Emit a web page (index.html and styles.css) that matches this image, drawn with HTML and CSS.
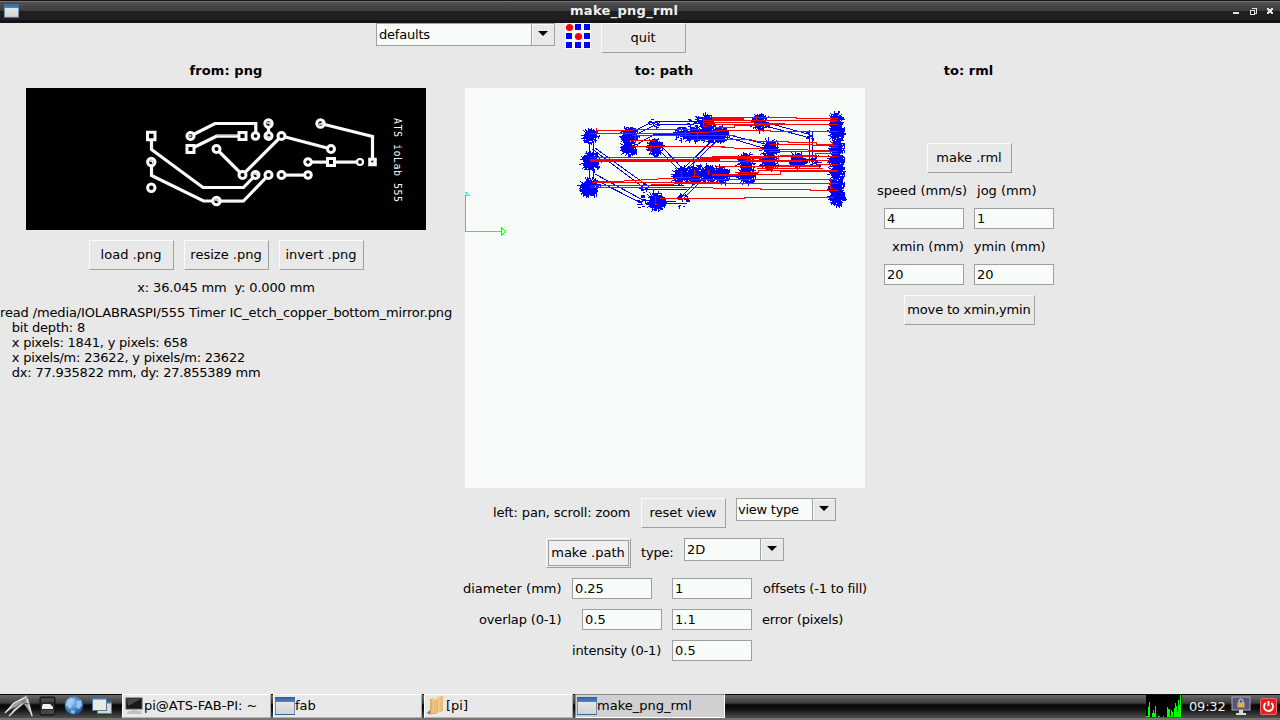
FILE: index.html
```html
<!DOCTYPE html>
<html lang="en">
<head>
<meta charset="utf-8">
<title>make_png_rml</title>
<link rel="stylesheet" href="styles.css">
</head>
<body>
<svg class="defs" width="0" height="0">
  <defs>
    <linearGradient id="blueBar" x1="0" y1="0" x2="0" y2="1"><stop offset="0" stop-color="#2f5f9f"/><stop offset="1" stop-color="#4d86c8"/></linearGradient>
    <linearGradient id="pane" x1="0" y1="0" x2="0" y2="1"><stop offset="0" stop-color="#eeeeea"/><stop offset="1" stop-color="#d0d3d4"/></linearGradient>
    <radialGradient id="globe" cx=".4" cy=".35" r=".7"><stop offset="0" stop-color="#9cc8f0"/><stop offset=".6" stop-color="#3f7fc4"/><stop offset="1" stop-color="#1b4a8c"/></radialGradient>
    <linearGradient id="folder" x1="0" y1="0" x2="1" y2="0"><stop offset="0" stop-color="#d9a55c"/><stop offset=".4" stop-color="#f6dca6"/><stop offset="1" stop-color="#e2b56c"/></linearGradient>
    <symbol id="win" viewBox="0 0 20 18"><rect x=".5" y=".5" width="19" height="17" fill="url(#pane)" stroke="#6f93bd"/><rect width="20" height="5" fill="url(#blueBar)"/><path d="M0 17.5H20" stroke="#3b6298"/></symbol>
  </defs>
</svg>

<header class="titlebar">
  <svg class="title-icon" width="15" height="14"><use href="#win" width="15" height="14"/></svg>
  <h1 class="title">make_png_rml</h1>
  <svg class="win-controls" width="48" height="12" viewBox="1230 5 48 12" shape-rendering="crispEdges">
    <path d="M1233 12h6v2h-6z" fill="#dfe2e2"/>
    <path d="M1252 8h4v5h-2M1250 10h4v4h-4z" transform="translate(0 0.5)" fill="none" stroke="#dfe2e2"/>
    <path d="M1267 8h2v1h2v-1h2v2h-1v2h1v2h-2v-1h-2v1h-2v-2h1v-2h-1z" fill="#dfe2e2"/>
  </svg>
</header>

<main class="app">
  <div class="toolbar">
    <div class="combo combo-wide"><span class="combo-text">defaults</span><span class="combo-btn"><i class="arrow"></i></span></div>
    <svg class="logo" width="26" height="26" viewBox="0 0 26 26" shape-rendering="crispEdges">
      <rect width="26" height="26" fill="#f8fcf9"/>
      <path d="M10 1h6v6h-6zM19 1h6v6h-6zM1 10h6v6H1zM19 10h6v6h-6zM1 19h6v6H1zM10 19h6v6h-6zM19 19h6v6h-6z" fill="#00f"/>
      <g fill="#f00" shape-rendering="auto"><circle cx="4.500" cy="4.500" r="3.600"/><circle cx="13.500" cy="13.500" r="3.600"/></g>
    </svg>
    <button class="btn">quit</button>
  </div>

  <div class="columns">
    <section class="col col-png">
      <h2 class="heading">from: png</h2>
      <svg class="board" width="400" height="142" viewBox="26 88 400 142">
        <rect x="26" y="88" width="400" height="142" fill="#000"/>
        <g fill="none" stroke="#f8fcf9" stroke-width="3.200">
          <path d="M151.500 136v13.500L203 187.500h40.500L255.500 175M151.500 162v13.500L203.500 201h40L268.500 175M190.500 136L215 123.500h40.800V136M190.500 149L216.500 136.200H242M268.500 124v12M216.500 149L242.500 175 281.500 136 331 149M320.500 123.500L372.500 136.500V162M308 162h52M281.500 175h26"/>
        </g>
        <path d="M216 135h21M220 202.400h23M284 176.500h20M311 163.500h45" stroke="#aaa8a8" stroke-width="1"/>
        <g fill="#000" stroke="#f8fcf9" stroke-width="3">
          <circle cx="151.300" cy="162" r="3.700"/><circle cx="151.300" cy="187.800" r="3.700"/>
          <circle cx="190.500" cy="136" r="3.500"/><circle cx="216.500" cy="149" r="3.500"/>
          <circle cx="216.500" cy="201" r="3.700"/><circle cx="242.500" cy="175" r="3.500"/>
          <circle cx="255.500" cy="175" r="3.500"/><circle cx="268.500" cy="175" r="3.500"/>
          <circle cx="281.500" cy="175" r="3.500"/><circle cx="308" cy="175" r="3.300"/>
          <circle cx="255.500" cy="136" r="3.300"/><circle cx="268.500" cy="136" r="3.500"/>
          <circle cx="268.500" cy="123.500" r="3.700"/><circle cx="281.500" cy="136" r="3.500"/>
          <circle cx="320.500" cy="123.500" r="3.700"/><circle cx="331" cy="149" r="3.500"/>
          <circle cx="308" cy="162" r="3.300"/><circle cx="360" cy="162" r="3" stroke-width="2.200"/>
          <path d="M147.500 132.200h7.500v7.500h-7.500zM187 145.500h7v7h-7zM239 132.500h7v7h-7zM327.500 158.500h7v7h-7zM369.700 159.200h5.600v5.600h-5.600z"/>
        </g>
        <g fill="none" stroke="#f8fcf9" stroke-width="1.300">
          <path d="M149.500 161h3v2.500M189 136h2.500M215 200h3v2.500M254 174h3v2M267 134v3h3M267 123h3v2M319 124h3v-2M371 163h3v-2"/>
        </g>
        <text class="board-label" transform="translate(394 118) rotate(90)" textLength="84" lengthAdjust="spacing" xml:space="preserve">ATS ioLab 555</text>
      </svg>
      <div class="row row-load"><button class="btn">load .png</button><button class="btn">resize .png</button><button class="btn">invert .png</button></div>
      <p class="coords">x: 36.045 mm&nbsp; y: 0.000 mm</p>
      <pre class="log"><span class="log-file">read /media/IOLABRASPI/555 Timer IC_etch_copper_bottom_mirror.png</span>
<span class="log-info">   bit depth: 8
   x pixels: 1841, y pixels: 658
   x pixels/m: 23622, y pixels/m: 23622
   dx: 77.935822 mm, dy: 27.855389 mm</span></pre>
    </section>

    <section class="col col-path">
      <h2 class="heading">to: path</h2>
      <svg class="canvas" width="400" height="400" viewBox="465 88 400 400" shape-rendering="crispEdges">
        <path d="M465.500 231V193.500M465.500 192l3.500 3h-3" stroke="#0ff" fill="none"/>
        <path d="M465.500 195V231.500H501" stroke="#9a9e9a" fill="none"/>
        <path d="M466 231.500H502" stroke="#4be34b" fill="none" opacity=".7"/>
        <path d="M501.500 227.500v8l4-4z" stroke="#0f0" fill="none"/>
        <g id="toolpath" fill="none" stroke="#00f">
          <path d="M589 143v10M593 144v9M589 169v10M593 168v11M592 149L643 187M595 148L645 184M595 174L641 199M592 178L641 203M643 189H687M646 185H684M645 203H687M662 201H676M636 130L652 122M637 134L655 125M655 121.500H694M655 124.500H694M636 145L654 134.500H684M658 149L681 172M663 148L684 170M687 169L722 136M684 168L718 135M680 198L708 170M684 198L712 170M723 136L763 148M725 134L765 144M762 125L810 138M764 122L808 134M809.500 130V163M812.500 131V164M793 159H816M700 176L745 176"/>
        </g>
        <g fill="none" stroke="#f00">
          <path d="M596 130.500H616L650 129.500H700M590 133.500H680L720 131.500M632 135.500H735M630 140.500H655M632 146.500H715L740 148.500 830 150.500M590 157.500H700L838 156.500M590 159.500H720M590 160.500H623V161.500H720L800 161.500M712 156.500H778M712 158.500H762M594 181.500H615L650 179.500 700 176.500M590 185.500H640L685 183.500H772M592 182.500H720M700 183.500H772M660 198.500H744V197.500H834M590 187.500H665L760 188.500V189.500H810V190.500H838M710 117.500H796V118.500H838M703 120.500H838M703 122.500H740L800 124.500H838M706 124.500H818M715 127.500H734V125.500H768M716 130.500H770V131.500H838M690 139.500H750L758 141.500H788V142.500H816V144.500H834M720 146.500H725M770 144.500H812V145.500H838M769 151.500H838M780 155.500H815V153.500H838M745 160.500H830M776 166.500H818V164.500H838M757 168.500H823M735 172.500H758V170.500H838M730 174.500H780V171.500H838M685 183.500H838M716 166.500H760L838 164.500M690 179.500H838" stroke-width="1"/>
          <path d="M700 158h58M590 160.500h130M712 119h32M712 175h28" stroke-width="2"/>
          <path d="M596 128v6M635 133v10M703 118v8h4M681 171v8M694 170v7M708 170v5M655 196v8h3M756 116v5M747 157v7M778 155v6M830 117v4h6M832 142v5h5M830 179v9h4M797 161h5M650 145v7M685 131v6M697 132v7h4"/>
        </g>
      </svg>
      <div class="row row-view"><span class="lbl w-pan">left: pan, scroll: zoom</span><button class="btn">reset view</button><div class="combo"><span class="combo-text combo-tight">view type</span><span class="combo-btn"><i class="arrow"></i></span></div></div>
      <div class="row row-make"><button class="btn focused">make .path</button><span class="lbl w-type">type:</span><div class="combo"><span class="combo-text">2D</span><span class="combo-btn"><i class="arrow"></i></span></div></div>
      <div class="row row-diam"><span class="lbl w-diam">diameter (mm)</span><span class="entry">0.25</span><span class="entry second">1</span><span class="lbl w-off">offsets (-1 to fill)</span></div>
      <div class="row row-over"><span class="lbl w-over">overlap (0-1)</span><span class="entry">0.5</span><span class="entry">1.1</span><span class="lbl w-err">error (pixels)</span></div>
      <div class="row row-int"><span class="lbl w-int">intensity (0-1)</span><span class="entry">0.5</span></div>
    </section>

    <section class="col col-rml">
      <h2 class="heading">to: rml</h2>
      <button class="btn make-rml">make .rml</button>
      <div class="row labels-a"><span class="lbl">speed (mm/s)</span><span class="lbl">jog (mm)</span></div>
      <div class="row entries"><span class="entry">4</span><span class="entry">1</span></div>
      <div class="row labels-b"><span class="lbl">xmin (mm)</span><span class="lbl">ymin (mm)</span></div>
      <div class="row entries"><span class="entry">20</span><span class="entry">20</span></div>
      <button class="btn move">move to xmin,ymin</button>
    </section>
  </div>
</main>

<footer class="taskbar">
  <div class="launchers">
    <svg width="120" height="24" viewBox="0 695 120 24">
      <path d="M5 713L12 704 27 695 29 701 33 717 24 704 19 708 9 716 15 707z" fill="#9a9e9e"/><path d="M5 713L14 703 26 697M9 716L22 703M27 699L32 716" stroke="#e4e6e6" stroke-width="1.200" fill="none"/><path d="M14 709L25 700M24 703l5 1" stroke="#444" stroke-width=".8"/>
      <rect x="40" y="697" width="15" height="18" rx="1.500" fill="#292c2c" stroke="#111"/><path d="M41 698h13v4H41z" fill="#454949"/><path d="M43 704h7l3 3v2H42v-3z" fill="#f1f1f1"/><path d="M41 710h13v4H41z" fill="#454747"/>
      <circle cx="74" cy="705.500" r="9.300" fill="url(#globe)"/><path d="M67 700l4-2 4 1-2 3-3 1 2 3-2 3-4-4zM76 701l5-1 1 5-3 4-3-2 1-3zM71 710l4 1-1 3-3-1z" fill="#b6d8f4" opacity=".75"/>
      <g stroke="#5579a4"><rect x="97.500" y="702.500" width="14" height="11" fill="#d7d9d4"/><path d="M97 702.500h15" stroke="#4276b5" stroke-width="2"/><rect x="92.500" y="698.500" width="14" height="12" fill="#e9e9e4"/><path d="M92 698.500h15" stroke="#4276b5" stroke-width="2"/></g>
    </svg>
  </div>
  <div class="task"><svg width="20" height="20" viewBox="0 0 20 20"><rect x="2" y="2" width="16" height="11" fill="#151818" stroke="#555"/><path d="M3 3h14L4 10z" fill="#454949"/><path d="M8 14h5v2H8zM3 17l1-2h13l1 2v1H3z" fill="#c0c2c2"/></svg><span class="task-text narrow">pi@ATS-FAB-PI: ~</span></div>
  <div class="task"><svg width="20" height="18"><use href="#win" width="20" height="18"/></svg><span class="task-text">fab</span></div>
  <div class="task"><svg width="20" height="20" viewBox="0 0 20 20"><path d="M1 17l5-5 4 6H3z" fill="#777"/><path d="M4 3l5-1v15l-5 2zM9 5l2-4 6-1v15l-8 3z" fill="url(#folder)"/><path d="M9 4v14M11 3v14" stroke="#c99b57" stroke-width=".8"/></svg><span class="task-text">[pi]</span></div>
  <div class="task active"><svg width="20" height="18"><use href="#win" width="20" height="18"/></svg><span class="task-text">make_png_rml</span></div>
  <div class="tray">
    <svg width="36" height="22" viewBox="0 0 36 22" shape-rendering="crispEdges"><rect width="36" height="22" fill="#000"/><path d="M0 22v-1h2v-9h1v-5h1v15h2v-4h1v-3h1v3h1v-7h1v11h2v-1h2v1h3v-1h1v1h3v-10h1v2h2v7h1v-6h1v2h1v5h1v-9h1v-5h1v3h1v6h1V5h1v5h1V0h1v22z" fill="#0f0"/></svg>
    <span class="clock">09:32</span>
    <svg width="20" height="20" viewBox="0 0 20 20"><rect x="1" y="1" width="18" height="13" fill="#5c5580" stroke="#a9a7b9"/><path d="M8 14h4v3h3v2H5v-2h3z" fill="#dcdcd4"/><path d="M8 7V5a2 2 0 0 1 4 0v2" stroke="#ddd" fill="none"/><rect x="6.500" y="6.500" width="7" height="5" fill="#d9b24b"/></svg>
    <svg class="power" width="17" height="17" viewBox="0 0 17 17"><rect x=".5" y=".5" width="16" height="16" rx="1.500" fill="#e22222" stroke="#f06a62"/><path d="M5.700 5a4.500 4.500 0 1 0 5.600 0M8.500 3v5" stroke="#fff" stroke-width="1.800" fill="none"/></svg>
  </div>
</footer>
<script src="toolpath.js"></script>
</body>
</html>
```
FILE: styles.css
```css
* { box-sizing: border-box; }
body {
  margin: 0; width: 1280px; height: 720px; overflow: hidden;
  display: flex; flex-direction: column;
  background: #e8e8e8; color: #000;
  font: 13px/15px "DejaVu Sans", sans-serif;
}
.defs { position: absolute; }
svg { display: block; flex: none; }
h1, h2, p, pre { margin: 0; font: inherit; }
.titlebar {
  height: 23px; flex: none; display: flex; align-items: flex-start;
  background: linear-gradient(#151515 0 1px, #777373 1px 2px, #505050 2px, #3c3c3c 11px, #1f1f1f 11px 20px, #151515 20px);
}
.title-icon { margin: 4px 0 0 4px; }
.title { width: 110px; margin: 3px 0 0 551px; font-weight: bold; letter-spacing: .3px; color: #eff1f0; white-space: nowrap; }
.win-controls { margin: 5px 0 0 550px; }
.app { flex: 1; min-height: 0; }
.toolbar { height: 39px; display: flex; align-items: flex-start; padding-left: 376px; }
.logo { margin: 0 10px; }
.btn {
  width: 85px; height: 30px; flex: none; padding: 0 1px 1px 0; margin: 0;
  display: flex; align-items: center; justify-content: center;
  font: inherit; color: #000; background: #e8e8e8; white-space: nowrap;
  border: 1px solid; border-color: #fbfdfb #9da09e #9da09e #fbfdfb; border-radius: 0;
}
.focused { background: #f0eeee; outline: 1px solid #9da09e; outline-offset: -3px; box-shadow: inset 0 0 0 1px #e8e8e8; }
.combo { width: 100px; height: 23px; display: flex; flex: none; border: 1px solid #9da09e; background: #f8fcf9; }
.combo-wide { width: 179px; }
.combo-text { flex: 1; padding: 3px 0 0 2px; white-space: nowrap; }
.combo-wide .combo-text { letter-spacing: -.2px; }
.combo-tight { padding-left: 1px; letter-spacing: -.25px; }
.combo-btn {
  width: 23px; display: flex; align-items: center; justify-content: center; padding: 0 1px 2px 0;
  border-left: 1px solid #9da09e; background: #e8e8e8; box-shadow: inset 1px 1px #f8fcf9;
}
.arrow { width: 0; height: 0; border: 5px solid transparent; border-top-color: #000; border-bottom: 0; }
.columns { display: flex; }
.col { display: flex; flex-direction: column; flex: none; }
.heading { height: 26px; padding-top: 1px; font-weight: bold; text-align: center; }
.row { display: flex; flex: none; }
.lbl { white-space: pre; }
.entry { width: 80px; height: 21px; flex: none; padding: 2px 0 0 2px; border: 1px solid #9da09e; background: #f8fcf9; }

.col-png { width: 452px; }
.col-png .heading { letter-spacing: .1px; }
.board { margin-left: 26px; }
.board-label { font: 10px "DejaVu Sans Mono", monospace; fill: #f8fcf9; }
.row-load { margin: 10px 0 10px 89px; gap: 10px; }
.coords { height: 25px; text-align: center; letter-spacing: -.16px; }
.log { white-space: pre; }
.log-file { letter-spacing: -.135px; }
.log-info { letter-spacing: -.21px; }

.col-path { width: 405px; margin-left: 10px; }
.col-path .heading { width: 404px; }
.canvas { margin-left: 3px; background: #f8fcf9; }
.row-view { height: 30px; margin: 10px 0 0 31px; gap: 10px; }
.row-make { height: 30px; margin: 10px 0 0 84px; gap: 10px; }
.row-view .lbl, .row-make .lbl { padding-top: 7px; }
.w-pan { width: 138px; letter-spacing: -.13px; }
.w-type { width: 33px; letter-spacing: -.2px; }
.row-diam { margin: 10px 0 0 1px; }
.row-over { margin: 10px 0 0 17px; gap: 10px; }
.row-int { margin: 10px 0 0 110px; gap: 10px; }
.row-diam .lbl, .row-over .lbl, .row-int .lbl { padding-top: 3px; }
.row-diam { gap: 10px; }
.w-diam { width: 99px; }
.w-off { padding-left: 1px; letter-spacing: -.18px; }
.w-err { letter-spacing: -.15px; }
.second { margin-left: 10px; }
.w-over { width: 93px; letter-spacing: -.15px; }
.w-int { width: 90px; letter-spacing: -.19px; }

.col-rml { width: 183px; margin-left: 10px; }
.make-rml { margin: 55px 0 10px 50px; }
.labels-a { gap: 10px; height: 25px; }
.labels-b { gap: 10px; height: 25px; margin: 10px 0 0 15px; }
.entries { gap: 10px; margin-left: 7px; }
.move { width: 131px; margin: 10px 0 0 27px; letter-spacing: -.17px; }

.taskbar {
  height: 26px; flex: none; display: flex; align-items: flex-start;
  background: linear-gradient(#0a0a0a 0 1px, #696b6b 1px, #3b3e3d 9px, #050505 11px, #101211 15px, #4d504f 24px, #777373 24px);
}
.launchers { width: 122px; padding-top: 1px; }
.task {
  width: 149px; height: 24px; flex: none; margin-right: 2px; padding: 0 0 1px 1px;
  display: flex; align-items: center; background: #e8e8e8;
  border: 1px solid; border-color: #fff #aaa #b5b5b5 #fff;
}
.active { background: #d0d0d0; border-color: #888 #fff #fff #888; width: 150px; }
.task-text { font-size: 13px; white-space: pre; }
.tray { display: flex; align-items: center; margin-left: auto; padding-right: 3px; height: 24px; }
.clock { width: 36px; margin: 1px 6px 0 7px; color: #eee; white-space: nowrap; letter-spacing: -.2px; }
.power { margin-left: 9px; }
```
FILE: toolpath.js
```js
// Draws the jagged contour clusters around each pad: [x, y, rx, ry, passes]
const pads = [
  [590,136,8,8,90],[590,161,9.5,10,110],[589,187,10,10,120],
  [629,135,9,9,100],[629,148,8,8,90],[655,147,8,9,75],
  [681,134,8,8,50],[694,135,9,8,70],[707,122,8,9,90],[708,134,9,9,90],[720,134,8,9,80],
  [681,175,9,9,90],[695,174,9,10,90],[708,174,9,9,90],[721,174,9,9,90],
  [656,201,9.5,9.5,110],[682,201,6,8,20],[642,201,5,8,16],[643,186,4,8,12],
  [654,123,6,5,14],[694,122,7,7,22],[760,122,8,9,90],
  [770,148,9,9,90],[769,161,9,9,75],[746,161,9,9,90],[747,175,9,9,85],
  [798,160,9,8,70],[810,134,5,6,14],[815,161,5,7,18],
  [836,121,7,9,85],[837,133,8,8,85],[837,147,8,9,85],[836,160,8,9,80],[837,172,8,8,80],
  [836,186,8,9,85],[837,197,8,9,85]
];
let seed = 555;
function rnd() { seed = (seed * 16807) % 2147483647; return seed / 2147483647; }
const group = document.getElementById("toolpath");
for (const [x, y, rx, ry, n] of pads) {
  let d = "";
  const dense = n > 60;
  for (let i = 0; i < n; i++) {
    const a = rnd() * Math.PI * 2;
    const k = Math.sqrt(rnd()) * 0.92;
    const px = Math.round(x - 1 + Math.cos(a) * rx * k) + 0.5;
    const py = Math.round(y + Math.sin(a) * ry * k) + 0.5;
    d += `M${px - 1} ${py}h${2 + Math.round(rnd() * 2)}v${Math.round(rnd() * 6) - 3}`;
  }
  // short spikes that reach past the dense core
  for (let i = 0; dense && i < 14; i++) {
    const a = (i + rnd() * 0.8) / 14 * Math.PI * 2;
    const k = 0.95 + rnd() * 0.25;
    const tx = x - 1 + Math.cos(a) * rx * k;
    const ty = y + Math.sin(a) * ry * k;
    d += `M${x - 0.5} ${y + 0.5}L${Math.round(tx) + 0.5} ${Math.round(ty) + 0.5}`;
  }
  const p = document.createElementNS("http://www.w3.org/2000/svg", "path");
  p.setAttribute("d", d);
  group.appendChild(p);
  if (dense) {
    const e = document.createElementNS("http://www.w3.org/2000/svg", "ellipse");
    e.setAttribute("cx", x - 0.5); e.setAttribute("cy", y);
    e.setAttribute("rx", rx * 0.6); e.setAttribute("ry", ry * 0.6);
    e.setAttribute("fill", "#00f");
    group.appendChild(e);
  }
}
```
